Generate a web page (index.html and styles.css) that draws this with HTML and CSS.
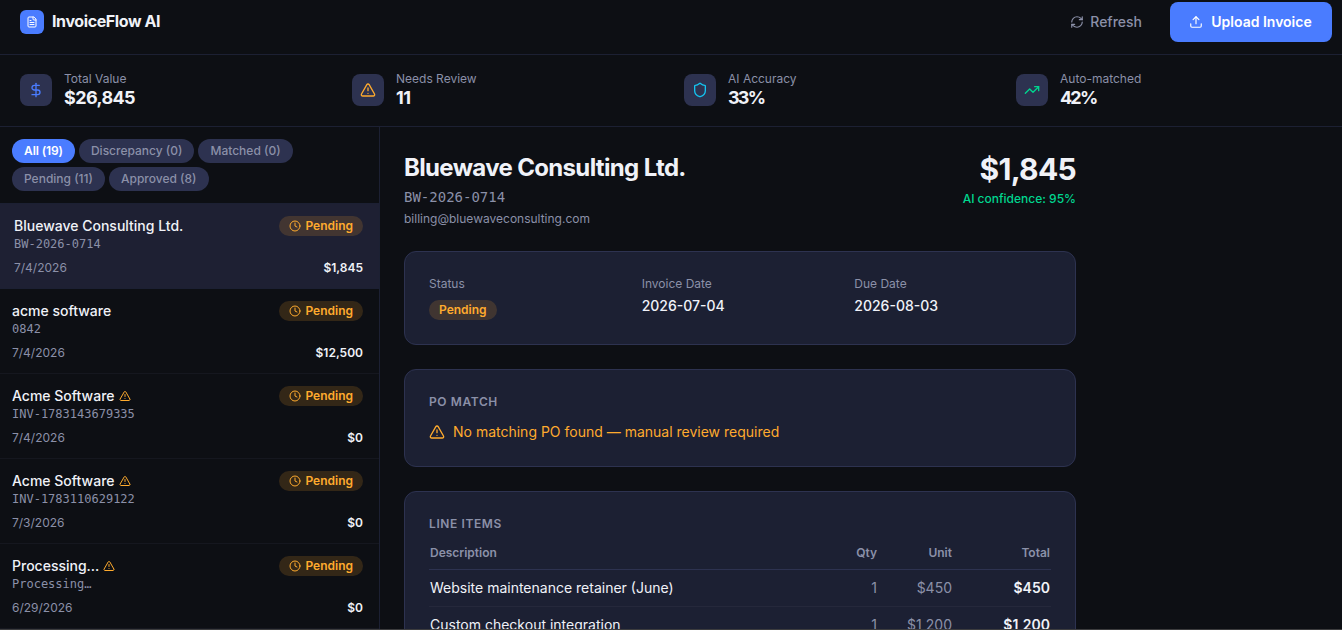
FILE: index.html
```html
<!DOCTYPE html>
<html lang="en">
<head>
  <meta charset="UTF-8">
  <meta name="viewport" content="width=device-width, initial-scale=1.0">
  <title>InvoiceFlow AI</title>
  <link rel="stylesheet" href="styles.css">
</head>
<body>
  <!-- shared icons -->
  <svg class="sprite">
    <symbol id="i-file" viewBox="0 0 24 24"><path d="M15 2H6a2 2 0 0 0-2 2v16a2 2 0 0 0 2 2h12a2 2 0 0 0 2-2V7Z"/><path d="M14 2v4a2 2 0 0 0 2 2h4"/><path d="M10 9H8"/><path d="M16 13H8"/><path d="M16 17H8"/></symbol>
    <symbol id="i-refresh" viewBox="0 0 24 24"><path d="M3 12a9 9 0 0 1 9-9 9.75 9.75 0 0 1 6.74 2.74L21 8"/><path d="M21 3v5h-5"/><path d="M21 12a9 9 0 0 1-9 9 9.75 9.75 0 0 1-6.74-2.74L3 16"/><path d="M8 16H3v5"/></symbol>
    <symbol id="i-upload" viewBox="0 0 24 24"><path d="M21 15v4a2 2 0 0 1-2 2H5a2 2 0 0 1-2-2v-4"/><path d="m17 8-5-5-5 5"/><path d="M12 3v12"/></symbol>
    <symbol id="i-dollar" viewBox="0 0 24 24"><path d="M12 2v20"/><path d="M17 5H9.5a3.5 3.5 0 0 0 0 7h5a3.5 3.5 0 0 1 0 7H6"/></symbol>
    <symbol id="i-warn" viewBox="0 0 24 24"><path d="m21.73 18-8-14a2 2 0 0 0-3.48 0l-8 14A2 2 0 0 0 4 21h16a2 2 0 0 0 1.73-3"/><path d="M12 9v4"/><path d="M12 17h.01"/></symbol>
    <symbol id="i-shield" viewBox="0 0 24 24"><path d="M20 13c0 5-3.5 7.5-7.66 8.95a1 1 0 0 1-.67-.01C7.5 20.5 4 18 4 13V6a1 1 0 0 1 1-1c2 0 4.5-1.2 6.24-2.72a1.17 1.17 0 0 1 1.52 0C14.51 3.81 17 5 19 5a1 1 0 0 1 1 1z"/></symbol>
    <symbol id="i-trend" viewBox="0 0 24 24"><path d="M22 7 13.5 15.5 8.5 10.5 2 17"/><path d="M16 7h6v6"/></symbol>
    <symbol id="i-clock" viewBox="0 0 24 24"><circle cx="12" cy="12" r="10"/><path d="M12 6v6l4 2"/></symbol>
  </svg>

  <div class="app">
    <header class="header">
      <div class="logo"><svg class="icon icon-12"><use href="#i-file"/></svg></div>
      <div class="brand">InvoiceFlow AI</div>
      <button class="btn-refresh"><svg class="icon icon-14"><use href="#i-refresh"/></svg>Refresh</button>
      <button class="btn-upload"><svg class="icon icon-14"><use href="#i-upload"/></svg>Upload Invoice</button>
    </header>

    <section class="stats">
      <div class="stat">
        <div class="stat-icon blue"><svg class="icon icon-16"><use href="#i-dollar"/></svg></div>
        <div>
          <div class="stat-label">Total Value</div>
          <div class="stat-value">$26,845</div>
        </div>
      </div>
      <div class="stat">
        <div class="stat-icon amber"><svg class="icon icon-16"><use href="#i-warn"/></svg></div>
        <div>
          <div class="stat-label">Needs Review</div>
          <div class="stat-value">11</div>
        </div>
      </div>
      <div class="stat">
        <div class="stat-icon cyan"><svg class="icon icon-16"><use href="#i-shield"/></svg></div>
        <div>
          <div class="stat-label">AI Accuracy</div>
          <div class="stat-value percent">33%</div>
        </div>
      </div>
      <div class="stat">
        <div class="stat-icon green"><svg class="icon icon-16"><use href="#i-trend"/></svg></div>
        <div>
          <div class="stat-label">Auto-matched</div>
          <div class="stat-value percent">42%</div>
        </div>
      </div>
    </section>

    <div class="body">
      <aside class="sidebar">
        <div class="filters">
          <button class="chip active">All (19)</button>
          <button class="chip">Discrepancy (0)</button>
          <button class="chip">Matched (0)</button>
          <button class="chip">Pending (11)</button>
          <button class="chip">Approved (8)</button>
        </div>
        <div class="item selected">
          <div class="item-top">
            <span class="item-name">Bluewave Consulting Ltd.</span>
            <span class="badge"><svg class="icon icon-12"><use href="#i-clock"/></svg>Pending</span>
          </div>
          <div class="item-id">BW-2026-0714</div>
          <div class="item-bottom"><span class="item-date">7/4/2026</span><span class="item-amount">$1,845</span></div>
        </div>
        <div class="item">
          <div class="item-top">
            <span class="item-name">acme software</span>
            <span class="badge"><svg class="icon icon-12"><use href="#i-clock"/></svg>Pending</span>
          </div>
          <div class="item-id">0842</div>
          <div class="item-bottom"><span class="item-date">7/4/2026</span><span class="item-amount">$12,500</span></div>
        </div>
        <div class="item">
          <div class="item-top">
            <span class="item-name">Acme Software<svg class="icon icon-12 amber"><use href="#i-warn"/></svg></span>
            <span class="badge"><svg class="icon icon-12"><use href="#i-clock"/></svg>Pending</span>
          </div>
          <div class="item-id">INV-1783143679335</div>
          <div class="item-bottom"><span class="item-date">7/4/2026</span><span class="item-amount">$0</span></div>
        </div>
        <div class="item">
          <div class="item-top">
            <span class="item-name">Acme Software<svg class="icon icon-12 amber"><use href="#i-warn"/></svg></span>
            <span class="badge"><svg class="icon icon-12"><use href="#i-clock"/></svg>Pending</span>
          </div>
          <div class="item-id">INV-1783110629122</div>
          <div class="item-bottom"><span class="item-date">7/3/2026</span><span class="item-amount">$0</span></div>
        </div>
        <div class="item">
          <div class="item-top">
            <span class="item-name">Processing...<svg class="icon icon-12 amber"><use href="#i-warn"/></svg></span>
            <span class="badge"><svg class="icon icon-12"><use href="#i-clock"/></svg>Pending</span>
          </div>
          <div class="item-id">Processing…</div>
          <div class="item-bottom"><span class="item-date">6/29/2026</span><span class="item-amount">$0</span></div>
        </div>
      </aside>

      <main class="detail">
        <div class="detail-head">
          <div>
            <h1 class="vendor">Bluewave Consulting Ltd.</h1>
            <div class="vendor-id">BW-2026-0714</div>
            <div class="vendor-email">billing@bluewaveconsulting.com</div>
          </div>
          <div class="detail-total">
            <div class="total-amount">$1,845</div>
            <div class="confidence">AI confidence: 95%</div>
          </div>
        </div>

        <div class="card fields">
          <div>
            <div class="field-label">Status</div>
            <span class="badge">Pending</span>
          </div>
          <div>
            <div class="field-label">Invoice Date</div>
            <div class="field-value">2026-07-04</div>
          </div>
          <div>
            <div class="field-label">Due Date</div>
            <div class="field-value">2026-08-03</div>
          </div>
        </div>

        <div class="card">
          <h2 class="card-title">PO Match</h2>
          <div class="po-warning"><svg class="icon icon-16"><use href="#i-warn"/></svg>No matching PO found — manual review required</div>
        </div>

        <div class="card">
          <h2 class="card-title">Line Items</h2>
          <table class="lines">
            <colgroup><col><col class="col-qty"><col class="col-unit"><col class="col-total"></colgroup>
            <thead>
              <tr><th>Description</th><th>Qty</th><th>Unit</th><th>Total</th></tr>
            </thead>
            <tbody>
              <tr><td>Website maintenance retainer (June)</td><td>1</td><td>$450</td><td>$450</td></tr>
              <tr><td>Custom checkout integration</td><td>1</td><td>$1,200</td><td>$1,200</td></tr>
            </tbody>
          </table>
        </div>
      </main>
    </div>
  </div>
</body>
</html>
```
FILE: styles.css
```css
* {
  box-sizing: border-box;
}

body {
  margin: 0;
  background: #0d0f14;
  color: #f0f2f8;
  font-family: Inter, sans-serif;
  font-size: 14px;
  line-height: 20px;
}

h1, h2 {
  margin: 0;
}

button {
  border: none;
  font-family: inherit;
  cursor: pointer;
}

.sprite {
  display: none;
}

.app {
  height: 100vh;
  display: flex;
  flex-direction: column;
  overflow: hidden;
  border-bottom: 1px solid #3c3c3e;
}

.icon {
  flex-shrink: 0;
  fill: none;
  stroke: currentColor;
  stroke-width: 2;
  stroke-linecap: round;
  stroke-linejoin: round;
}

.icon-12 { width: 12px; height: 12px; }
.icon-14 { width: 14px; height: 14px; }
.icon-16 { width: 16px; height: 16px; }

.blue { color: #4a7cff; }
.amber { color: #ffab2e; }
.cyan { color: #14c4f0; }
.green { color: #00d68f; }

/* header */
.header {
  flex-shrink: 0;
  display: flex;
  align-items: center;
  height: 55px;
  padding: 2px 10px 12px 20px;
  border-bottom: 1px solid #1c2033;
}

.logo {
  display: flex;
  align-items: center;
  justify-content: center;
  width: 24px;
  height: 24px;
  margin-right: 8px;
  border-radius: 6px;
  background: #4a7cff;
  color: #fff;
}

.brand {
  flex: 1;
  padding-bottom: 2px;
  font-size: 16px;
  font-weight: 700;
  letter-spacing: -0.4px;
}

.btn-refresh {
  display: flex;
  align-items: center;
  gap: 6px;
  padding: 0 0 1px;
  margin-right: 28px;
  background: none;
  color: #8b90a8;
  font-size: 14px;
  font-weight: 500;
}

.btn-upload {
  display: flex;
  align-items: center;
  justify-content: center;
  gap: 8px;
  width: 162px;
  height: 40px;
  padding: 0 1px 1px 0;
  border-radius: 8px;
  background: #4a7cff;
  color: #fff;
  font-size: 14px;
  font-weight: 600;
}

/* stats */
.stats {
  flex-shrink: 0;
  display: grid;
  grid-template-columns: repeat(4, 1fr);
  gap: 24px;
  height: 72px;
  padding: 0 18px 1px 20px;
  align-items: center;
  border-bottom: 1px solid #1c2033;
}

.stat {
  display: flex;
  align-items: center;
  gap: 12px;
}

.stat-icon {
  display: flex;
  align-items: center;
  justify-content: center;
  width: 32px;
  height: 32px;
  border-radius: 8px;
  background: #2d3250;
}

.stat-label {
  color: #8b90a8;
  font-size: 12px;
  line-height: 16px;
}

.stat-value {
  font-size: 18px;
  font-weight: 700;
  line-height: 22px;
  letter-spacing: -0.6px;
}

.stat-value.percent {
  letter-spacing: -1.8px;
}

.body {
  flex: 1;
  display: flex;
  min-height: 0;
}

/* invoice list */
.sidebar {
  flex-shrink: 0;
  width: 380px;
  overflow: hidden;
  border-right: 1px solid #1c2033;
}

.filters {
  display: flex;
  flex-wrap: wrap;
  gap: 4px;
  padding: 12px;
  border-bottom: 1px solid #1c2033;
}

.chip {
  padding: 4px 12px;
  border-radius: 12px;
  background: #2d3250;
  color: #8b90a8;
  font-size: 12px;
  font-weight: 500;
  line-height: 16px;
}

.chip.active {
  background: #4a7cff;
  color: #fff;
  font-weight: 600;
  letter-spacing: -0.1px;
}

.item {
  padding: 12px 16px 12px 12px;
  border-bottom: 1px solid #15171f;
}

.item.selected {
  padding-left: 14px;
  background: #1e2033;
  border-bottom-color: #1c2033;
}

.item-top,
.item-bottom {
  display: flex;
  align-items: center;
  justify-content: space-between;
}

.item-name {
  display: flex;
  align-items: center;
  gap: 4px;
  font-weight: 500;
}

.item-id {
  color: #8b90a8;
  font-family: "DejaVu Sans Mono", monospace;
  font-size: 12px;
  line-height: 16px;
}

.item-bottom {
  margin-top: 8px;
  font-size: 12px;
  line-height: 16px;
}

.item-date {
  color: #8b90a8;
}

.item-amount {
  font-weight: 600;
}

.badge {
  display: inline-flex;
  align-items: center;
  gap: 4px;
  height: 20px;
  padding: 0 10px;
  border-radius: 10px;
  background: rgba(255, 171, 46, 0.16);
  color: #ffab2e;
  font-size: 12px;
  font-weight: 600;
  line-height: 16px;
}

/* invoice detail */
.detail {
  width: 720px;
  padding: 24px;
  overflow: hidden;
}

.detail-head {
  display: flex;
  justify-content: space-between;
  margin-bottom: 24px;
}

.vendor {
  padding-top: 1px;
  font-size: 24px;
  font-weight: 700;
  line-height: 31px;
  letter-spacing: -0.66px;
}

.vendor-id {
  margin-top: 4px;
  color: #8b90a8;
  font-family: "DejaVu Sans Mono", monospace;
}

.vendor-email {
  margin-top: 4px;
  color: #8b90a8;
  font-size: 12px;
  line-height: 16px;
}

.detail-total {
  text-align: right;
}

.total-amount {
  font-size: 30px;
  font-weight: 700;
  line-height: 36px;
  letter-spacing: -0.7px;
}

.confidence {
  margin-top: 4px;
  color: #00d68f;
  font-size: 12px;
  font-weight: 500;
  line-height: 16px;
}

.card {
  margin-bottom: 24px;
  padding: 24px;
  border: 1px solid #2d3250;
  border-radius: 12px;
  background: #1c2033;
}

.fields {
  display: grid;
  grid-template-columns: repeat(3, 1fr);
  gap: 16px;
}

.field-label {
  margin-bottom: 4px;
  color: #8b90a8;
  font-size: 12px;
  line-height: 16px;
}

.field-value {
  font-weight: 500;
}

.fields .badge {
  display: flex;
  width: fit-content;
  margin-top: 8px;
}

.card-title {
  margin-bottom: 12px;
  color: #8b90a8;
  font-size: 12px;
  font-weight: 600;
  line-height: 16px;
  letter-spacing: 0.6px;
  text-transform: uppercase;
}

.po-warning {
  display: flex;
  align-items: center;
  gap: 8px;
  color: #ffab2e;
}

.lines {
  width: 100%;
  table-layout: fixed;
  border-collapse: collapse;
}

.col-qty { width: 60px; }
.col-unit { width: 75px; }
.col-total { width: 98px; }

.lines th {
  padding: 1px 1px 8px;
  border-bottom: 1px solid #2d3250;
  color: #8b90a8;
  font-size: 12px;
  font-weight: 600;
  line-height: 16px;
  text-align: right;
}

.lines td {
  padding: 8px 1px;
  border-bottom: 1px solid #25283b;
  color: #8b90a8;
  text-align: right;
}

.lines th:first-child,
.lines td:first-child {
  text-align: left;
}

.lines td:first-child {
  color: #f0f2f8;
}

.lines td:last-child {
  color: #f0f2f8;
  font-weight: 600;
}
```
